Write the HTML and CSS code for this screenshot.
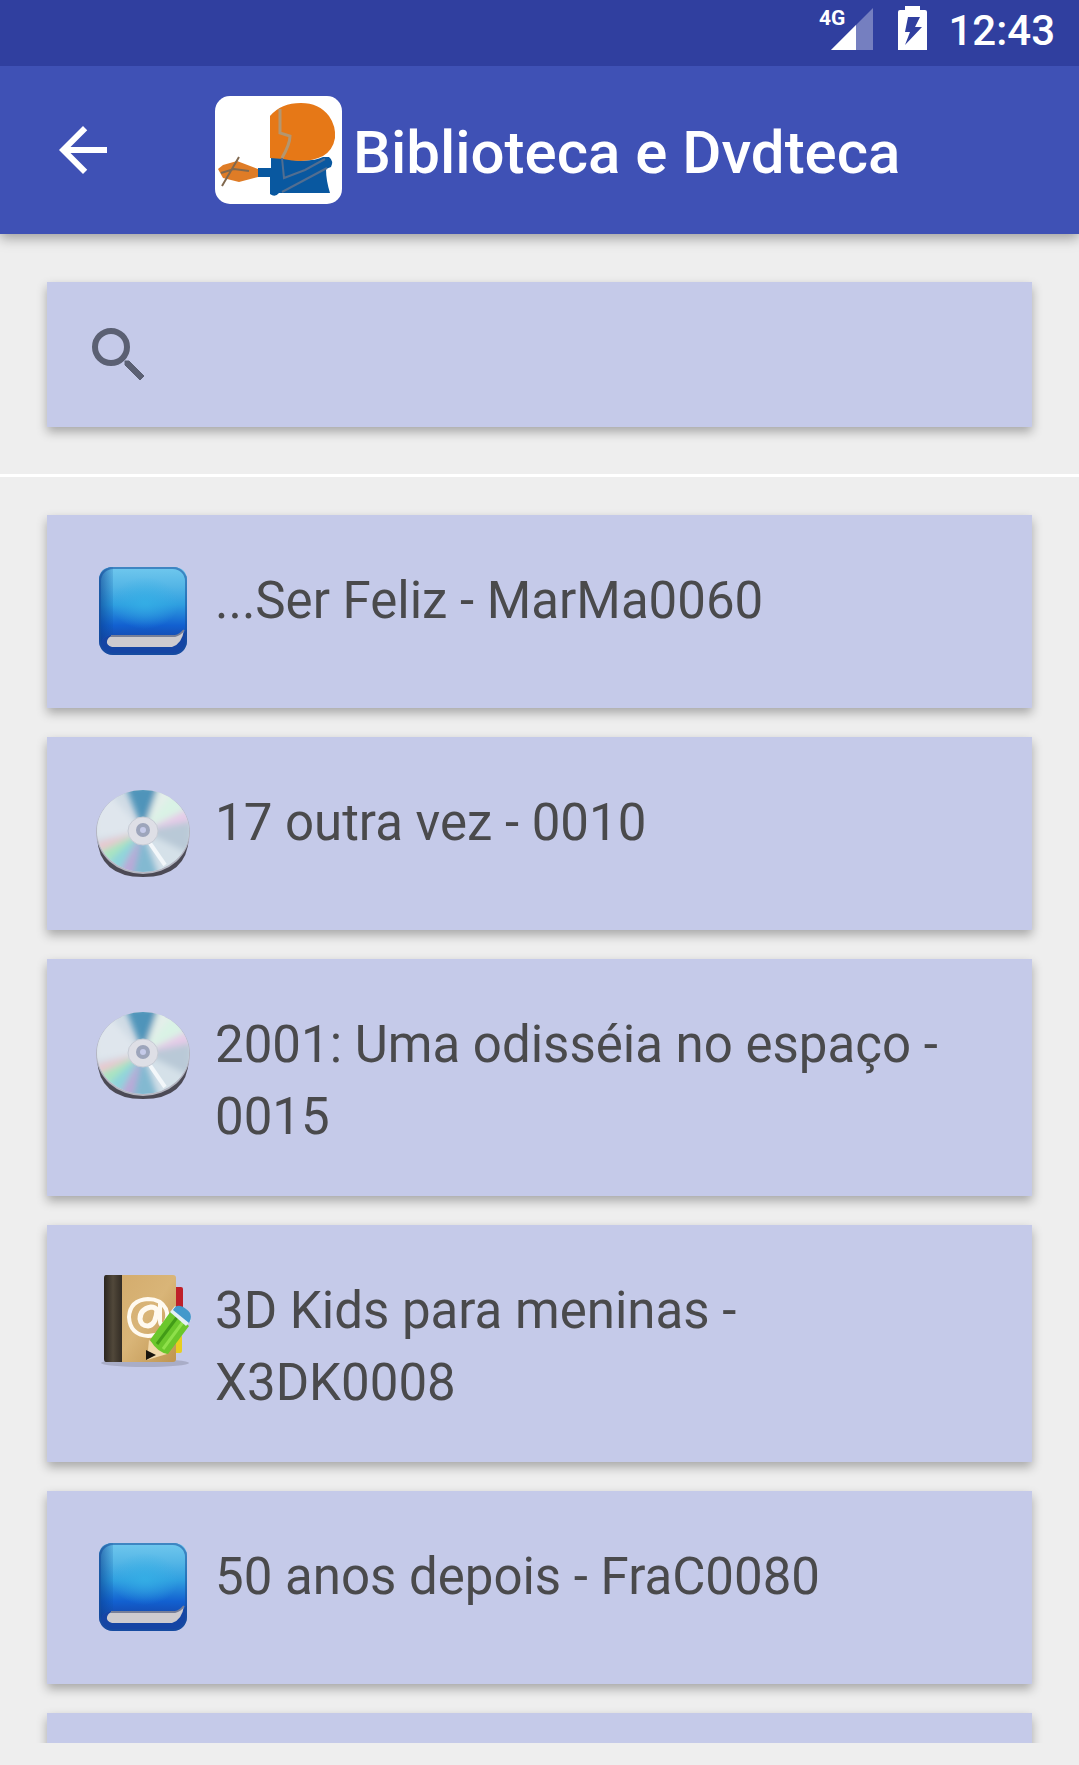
FILE: index.html
```html
<!DOCTYPE html>
<html lang="pt-BR">
<head>
<meta charset="utf-8">
<meta name="viewport" content="width=device-width, initial-scale=1">
<title>Biblioteca e Dvdteca</title>
<link rel="stylesheet" href="styles.css">
</head>
<body>
<svg class="defs" aria-hidden="true">
  <defs>
    <linearGradient id="cover" x1="0" y1="0" x2="0" y2="1">
      <stop offset="0" stop-color="#70c8ee"/>
      <stop offset=".25" stop-color="#55b6e6"/>
      <stop offset=".5" stop-color="#2f9fe0"/>
      <stop offset=".78" stop-color="#1260d0"/>
      <stop offset="1" stop-color="#1545a8"/>
    </linearGradient>
    <linearGradient id="spine" x1="0" y1="0" x2="1" y2="0">
      <stop offset="0" stop-color="#0b3f8f" stop-opacity=".65"/>
      <stop offset="1" stop-color="#0b4fa0" stop-opacity=".15"/>
    </linearGradient>
    <radialGradient id="glow">
      <stop offset="0" stop-color="#35b0e6" stop-opacity=".8"/>
      <stop offset="1" stop-color="#35b0e6" stop-opacity="0"/>
    </radialGradient>
    <linearGradient id="leather" x1="0" y1="0" x2="1" y2="0">
      <stop offset="0" stop-color="#2b2620"/>
      <stop offset=".5" stop-color="#51483a"/>
      <stop offset="1" stop-color="#332c24"/>
    </linearGradient>
    <linearGradient id="kraft" x1="0" y1="0" x2="1" y2="1">
      <stop offset="0" stop-color="#d3ab6c"/>
      <stop offset=".5" stop-color="#d9b578"/>
      <stop offset="1" stop-color="#bf9450"/>
    </linearGradient>
    <clipPath id="disc-face"><ellipse cx="48" cy="46" rx="46" ry="41"/></clipPath>
    <filter id="blend" x="-20%" y="-20%" width="140%" height="140%"><feGaussianBlur stdDeviation="3"/></filter>
    <symbol id="book" viewBox="0 0 96 96">
      <rect x="4" y="4" width="88" height="88" rx="14" fill="#1545a4"/>
      <path d="M4 18Q4 4 18 4H78Q92 4 92 18V66Q89 72 82 72H17Q9 73 6 79L4 76Z" fill="url(#cover)"/>
      <ellipse cx="50" cy="40" rx="34" ry="26" fill="url(#glow)"/>
      <path d="M4 18Q4 4 18 4V71Q9 72 6 79L4 76Z" fill="url(#spine)"/>
      <path d="M17 73H80Q85 72 89 67Q87 81 77 84H17Q11 82 12 78Q13 74 17 73Z" fill="#cdcbcf"/>
      <path d="M16 73H80Q85 72 89 67" fill="none" stroke="#777f98" stroke-width="2"/>
      <rect x="5" y="5" width="86" height="86" rx="13" fill="none" stroke="#17509f" stroke-opacity=".55" stroke-width="2"/>
    </symbol>
    <symbol id="disc" viewBox="0 0 96 96">
      <path d="M2 52Q4 92 48 92Q92 92 94 52Z" fill="#4c4a55"/>
      <ellipse cx="48" cy="47" rx="47" ry="42" fill="#b4b6c2"/>
      <g clip-path="url(#disc-face)">
        <rect width="96" height="96" fill="#d0dbe5"/>
        <g filter="url(#blend)">
          <path d="M48 46L30 0H64Z" fill="#4f94ba"/>
          <path d="M48 46L64 0L84 10Z" fill="#e4efea"/>
          <path d="M48 46L78 8L96 26Z" fill="#d9f3e5"/>
          <path d="M48 46L96 22V38Z" fill="#e6cbe8"/>
          <path d="M48 46L96 36V70Z" fill="#b9c9d7"/>
          <path d="M48 46L96 70L64 96Z" fill="#d5e1e9"/>
          <path d="M48 46L66 96H36Z" fill="#83b9d1"/>
          <path d="M48 46L36 96L20 84Z" fill="#bba8d8"/>
          <path d="M48 46L24 88L12 76Z" fill="#8fd4dc"/>
          <path d="M48 46L12 78L2 66Z" fill="#a9e4c1"/>
          <path d="M48 46L2 68V58Z" fill="#ecc6ce"/>
          <path d="M48 46L0 54V18L14 8Z" fill="#dfe6ed"/>
        </g>
        <path d="M52 54L70 80" stroke="#f3f7fa" stroke-width="4"/>
      </g>
      <ellipse cx="48" cy="46" rx="15" ry="14" fill="#dedfe6" stroke="#c7ccd5"/>
      <circle cx="48" cy="45" r="7" fill="#9da5bb"/>
      <circle cx="48" cy="45" r="3" fill="#c5cae9"/>
    </symbol>
    <symbol id="address-book" viewBox="0 0 96 96">
      <ellipse cx="50" cy="90" rx="44" ry="4" fill="#8d8fa6" opacity=".5"/>
      <rect x="78" y="14" width="10" height="22" rx="2" fill="#bf2029"/>
      <rect x="78" y="39" width="9" height="20" fill="#4a90c4"/>
      <rect x="78" y="62" width="9" height="18" rx="2" fill="#e8ce20"/>
      <rect x="20" y="2" width="61" height="87" rx="3" fill="url(#kraft)"/>
      <path d="M11 2H27V89H11Q9 89 9 86V5Q9 2 11 2Z" fill="url(#leather)"/>
      <path d="M65 30V48Q65 54 70 50Q74 44 71 36Q66 26 53 26Q35 27 34 44Q35 62 53 63Q60 63 65 60" fill="none" stroke="#fffaf0" stroke-width="4"/>
      <path d="M62 37Q60 34 56 34Q45 36 45 46Q46 53 53 53Q61 52 62 37Z" fill="none" stroke="#fffaf0" stroke-width="5"/>
      <path d="M54 67L72 81L52 87Z" fill="#f2d9ab"/>
      <path d="M51 77L61 82L51 87Z" fill="#18150e"/>
      <path d="M55 67L76 38L94 53L73 81Q63 80 55 67Z" fill="#6bc72c"/>
      <path d="M62 71L83 43" stroke="#429b17" stroke-width="3"/>
      <path d="M68 76L88 49" stroke="#8ee04a" stroke-width="3"/>
      <path d="M75 39L80 33L96 47L91 53Z" fill="#e4f0f5"/>
      <path d="M78 37Q82 29 91 36Q99 41 94 50Z" fill="#4399cb"/>
    </symbol>
  </defs>
</svg>

<div class="status">
  <span class="network">4G</span>
  <svg class="signal" viewBox="0 0 42 42" role="img" aria-label="Sinal"><path d="M42 0V42H0Z" fill="#757fc0"/><path d="M25 17V42H0Z" fill="#fff"/></svg>
  <svg class="battery" viewBox="0 0 29 44" role="img" aria-label="Carregando"><path d="M7 0H22V4H27Q29 4 29 6V44H0V6Q0 4 2 4H7Z" fill="#fff"/><path d="M10 11H22L17 21H24L7 39L12 26H7Z" fill="#303f9f"/></svg>
  <time class="clock">12:43</time>
</div>

<header class="appbar">
  <button class="back" type="button" aria-label="Voltar"><svg viewBox="0 0 24 24"><path d="M20 11H7.83l5.59-5.59L12 4l-8 8 8 8 1.41-1.41L7.83 13H20z" fill="#fff"/></svg></button>
  <svg class="logo" viewBox="0 0 127 108" aria-hidden="true">
    <rect width="127" height="108" rx="15" fill="#fff"/>
    <path d="M43 72H56V62Q70 60 78 64Q98 66 108 61H114Q119 65 116 71L111 73Q111 84 115 97H64Q60 102 55 98V81H43Z" fill="#0958a0"/>
    <path d="M55 62V20Q66 7 86 7Q104 7 114 20Q121 30 120 42Q118 54 108 60Q92 68 68 63Z" fill="#e67817"/>
    <path d="M65 13V37L75 40Q75 48 67 62" fill="none" stroke="#b39670" stroke-width="3"/>
    <path d="M67 62L69 82L90 74L110 63M67 96L112 72" fill="none" stroke="#526e91" stroke-width="2"/>
    <path d="M3 73L8 69L22 65L43 73L43 81L24 86L8 82Z" fill="#df7c26"/>
    <path d="M24 61L7 90M6 77L19 73L34 75" fill="none" stroke="#80684e" stroke-width="2"/>
  </svg>
  <h1 class="title">Biblioteca e Dvdteca</h1>
</header>

<main class="content">
  <form class="search" role="search">
    <label class="card searchbox">
      <svg viewBox="0 0 72 72" aria-hidden="true"><circle cx="28" cy="28" r="16" fill="none" stroke="#5b6073" stroke-width="6"/><path d="M42 46V42H46L61 57L57 61Z" fill="#5b6073" stroke="#5b6073"/></svg>
      <input type="search" aria-label="Pesquisar">
    </label>
  </form>
  <ul class="list">
    <li class="card item"><svg viewBox="0 0 96 96"><use href="#book"/></svg><span>...Ser Feliz - MarMa0060</span></li>
    <li class="card item"><svg viewBox="0 0 96 96"><use href="#disc"/></svg><span>17 outra vez - 0010</span></li>
    <li class="card item"><svg viewBox="0 0 96 96"><use href="#disc"/></svg><span>2001: Uma odisséia no espaço - 0015</span></li>
    <li class="card item"><svg viewBox="0 0 96 96"><use href="#address-book"/></svg><span>3D Kids para meninas - X3DK0008</span></li>
    <li class="card item"><svg viewBox="0 0 96 96"><use href="#book"/></svg><span>50 anos depois - FraC0080</span></li>
    <li class="card item"></li>
  </ul>
</main>
</body>
</html>
```
FILE: styles.css
```css
* {
  box-sizing: border-box;
}

body {
  display: flex;
  flex-direction: column;
  height: 100vh;
  margin: 0;
  padding-bottom: 22px;
  overflow: hidden;
  background: #eeeeee;
  color: #4a4a4c;
  font-family: Roboto, sans-serif;
}

svg {
  display: block;
  flex: none;
}

.defs {
  position: absolute;
  width: 0;
  height: 0;
}

.status {
  position: relative;
  z-index: 2;
  display: flex;
  flex: none;
  align-items: flex-start;
  justify-content: flex-end;
  height: 66px;
  padding: 6px 24px 0 0;
  background: #303f9f;
  color: #fff;
}

.network {
  margin-right: -14px;
  font-size: 21px;
  font-weight: 700;
  line-height: 24px;
}

.signal {
  width: 42px;
  height: 42px;
  margin: 2px 25px 0 0;
}

.battery {
  width: 29px;
  height: 44px;
  margin-right: 21px;
}

.clock {
  font-size: 42px;
  font-weight: 500;
  line-height: 50px;
}

.appbar {
  position: relative;
  z-index: 1;
  display: flex;
  flex: none;
  align-items: center;
  height: 168px;
  padding: 0 47px;
  background: #3f51b5;
  color: #fff;
  box-shadow: 0 4px 12px rgba(0, 0, 0, 0.35);
}

.back {
  width: 72px;
  height: 72px;
  margin-right: 96px;
  padding: 0;
  border: 0;
  background: none;
}

.logo {
  width: 127px;
  height: 108px;
  margin-right: 11px;
}

.title {
  margin: 0;
  padding-top: 5px;
  font-size: 60px;
  font-weight: 500;
  line-height: 72px;
  white-space: nowrap;
}

.content {
  flex: 1;
  min-height: 0;
  overflow: hidden;
}

.card {
  background: #c5cae9;
  box-shadow: 0 5px 10px rgba(0, 0, 0, 0.3);
}

.search {
  padding: 48px 47px 47px;
  border-bottom: 3px solid #fff;
}

.searchbox {
  display: flex;
  align-items: center;
  height: 145px;
  padding: 0 36px;
}

.searchbox svg {
  width: 72px;
  height: 72px;
}

.searchbox input {
  flex: 1;
  min-width: 0;
  height: 96px;
  padding: 0 24px;
  border: 0;
  outline: 0;
  background: none;
  color: inherit;
  font: inherit;
  font-size: 51px;
}

.list {
  display: flex;
  flex-direction: column;
  gap: 29px;
  margin: 0;
  padding: 38px 47px;
  list-style: none;
}

.item {
  display: flex;
  gap: 24px;
  min-height: 193px;
  padding: 48px 48px 43px;
  font-size: 51px;
  line-height: 72px;
}

.item span {
  padding-top: 2px;
}

.item svg {
  width: 96px;
  height: 96px;
}
```
